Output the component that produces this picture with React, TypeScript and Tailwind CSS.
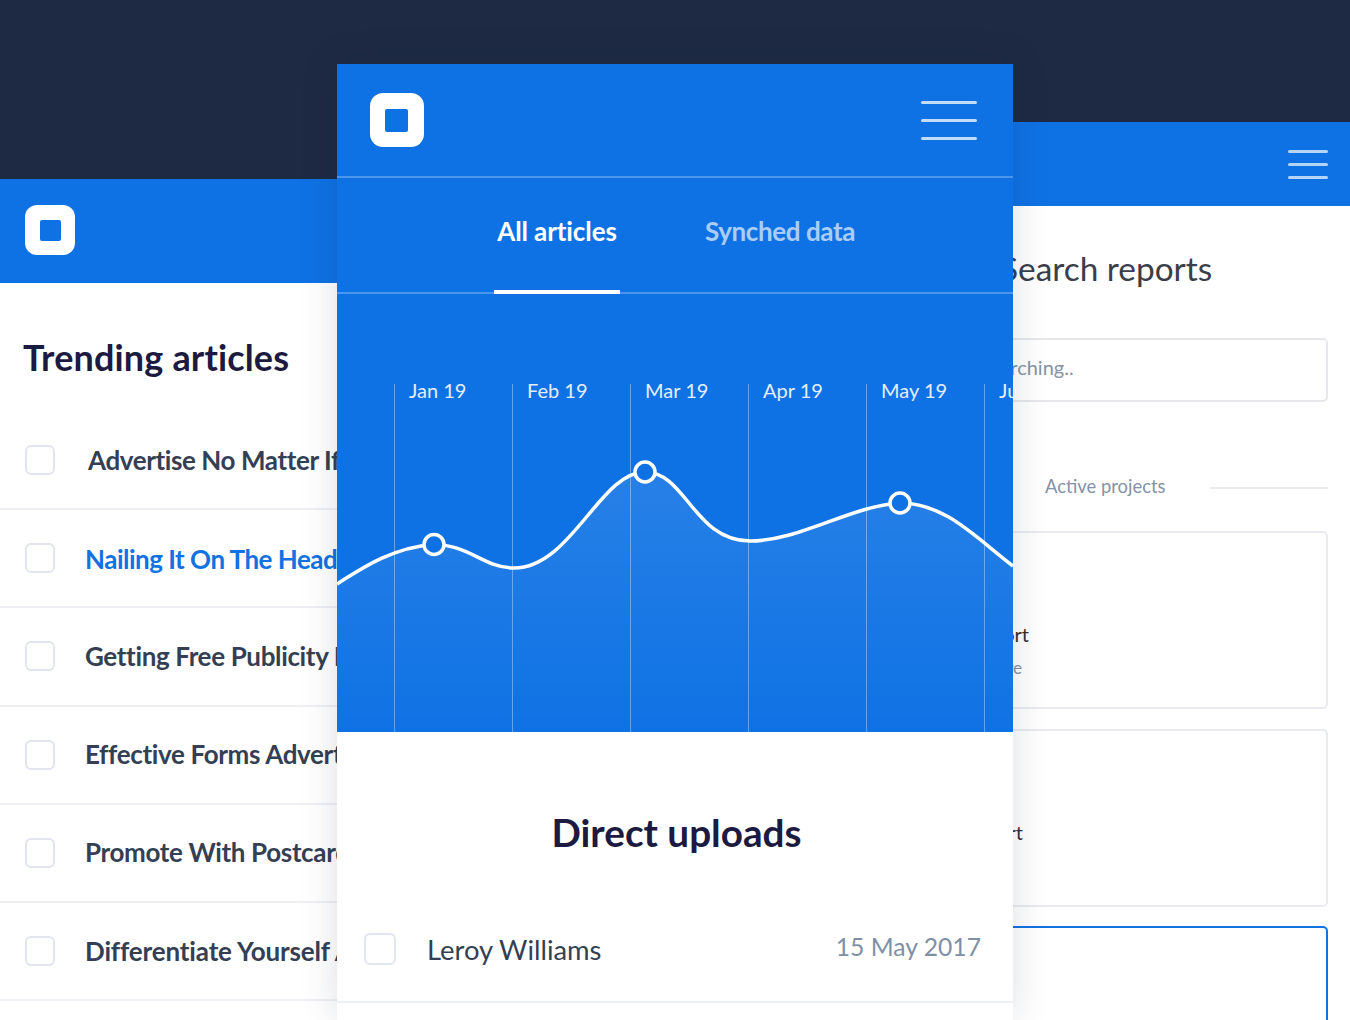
const articles = [
  { title: "Advertise No Matter If You Are Small", track: "tracking-[-0.4px]", offset: "ml-[33px]", color: "text-[#353f54]" },
  { title: "Nailing It On The Head With Free", track: "tracking-[-0.5px]", offset: "ml-[30px] mt-[3px]", color: "text-[#1272e2]" },
  { title: "Getting Free Publicity For Your Brand", track: "tracking-[-0.35px]", offset: "ml-[30px]", color: "text-[#353f54]" },
  { title: "Effective Forms Advertising Internet", track: "tracking-[-0.35px]", offset: "ml-[30px]", color: "text-[#353f54]" },
  { title: "Promote With Postcards For Growth", track: "tracking-[-0.35px]", offset: "ml-[30px]", color: "text-[#353f54]" },
  { title: "Differentiate Yourself And Attract", track: "tracking-[-0.15px]", offset: "ml-[30px]", color: "text-[#353f54]" },
];

const months = ["Jan 19", "Feb 19", "Mar 19", "Apr 19", "May 19", "Jun 19"];

const curve =
  "M337 583 C365 565 395 546 434 543.5 C470 544 484 567 514 567 C571 567 600 471 645 471 C686 471 694 540 750 540 C800 540 850 505 900 502 C945 502 975 536 1013 565";

function Logo({ box, inner, radius }: { box: string; inner: string; radius: string }) {
  return (
    <div className={`${box} ${radius} bg-white flex items-center justify-center shrink-0`}>
      <div className={`${inner} bg-[#0f72e4] rounded-[2px]`} />
    </div>
  );
}

function Check({ size }: { size: string }) {
  return <div className={`${size} shrink-0 rounded-[6px] border-2 border-[#e2e4ef] bg-white`} />;
}

function LeftPanel() {
  return (
    <div className="absolute left-0 top-[179px] w-[337px] h-[841px] bg-white overflow-hidden">
      <div className="h-[104px] bg-[#0f72e4] flex items-center pl-[25px]">
        <Logo box="w-[50px] h-[50px] -mt-[2px]" inner="w-[21px] h-[21px]" radius="rounded-[12px]" />
      </div>
      <h2 className="pl-[23px] pt-[50px] h-[129px] text-[36px] leading-[48px] font-bold tracking-[0.15px] text-[#1c1a40]">
        Trending articles
      </h2>
      <div>
        {articles.map((a) => (
          <div key={a.title} className="h-[98.2px] flex items-center pl-[25px] border-b-2 border-[#eff0f5] whitespace-nowrap">
            <Check size="w-[30px] h-[30px]" />
            <span className={`text-[26px] font-bold ${a.track} ${a.offset} ${a.color}`}>{a.title}</span>
          </div>
        ))}
      </div>
    </div>
  );
}

function Card({ children, active }: { children?: React.ReactNode; active?: boolean }) {
  return (
    <div className={`h-[178px] rounded-[5px] border-2 ${active ? "border-[#1272e2]" : "border-[#e9ebef]"} flex flex-col justify-start`}>
      {children}
    </div>
  );
}

function RightPanel() {
  return (
    <div className="absolute left-[700px] right-0 top-[122px] h-[898px] bg-white overflow-hidden">
      <div className="h-[84px] bg-[#0f72e4] flex items-center justify-end pr-[22px]">
        <div className="w-[40px] flex flex-col gap-[10px]">
          <div className="h-[3px] bg-[#b5d5f8] rounded-full" />
          <div className="h-[3px] bg-[#b5d5f8] rounded-full" />
          <div className="h-[3px] bg-[#b5d5f8] rounded-full" />
        </div>
      </div>
      <div className="pr-[22px]">
        <h2 className="ml-[300px] mt-[37px] text-[33.4px] leading-[50px] text-[#393e4a]">Search reports</h2>
        <div className="mt-[45px] h-[64px] rounded-[5px] border-2 border-[#e6e8ec] flex items-center pl-[277px] pb-[6px] text-[20px] text-[#8492a6]">
          Searching..
        </div>
        <div className="mt-[72px] h-[26px] flex items-center text-[18.4px] text-[#8492a6]">
          <span className="ml-[345px] w-[165px] shrink-0">Active projects</span>
          <div className="flex-1 h-[2px] mt-[2px] bg-[#e9ebef]" />
        </div>
        <div className="mt-[31px] flex flex-col gap-[19.5px]">
          <Card>
            <div className="w-[327px] pt-[88px] text-right text-[20px] leading-[26px] text-[#2c3038] whitespace-nowrap">Project report</div>
            <div className="w-[320px] mt-[10px] text-right text-[17px] leading-[22px] text-[#8492a6] whitespace-nowrap">Updated a while ago once more</div>
          </Card>
          <Card>
            <div className="w-[321px] pt-[88px] text-right text-[20px] leading-[26px] text-[#2c3038] whitespace-nowrap">Project chart</div>
          </Card>
          <Card active />
        </div>
      </div>
    </div>
  );
}

function Chart() {
  return (
    <div className="relative h-[438px] pt-[90px] pl-[57px] flex overflow-hidden">
      {months.map((m) => (
        <div key={m} className="w-[118px] shrink-0 border-l border-white/35 pl-[14px] text-[20px] leading-[12px] text-[#e3eefc] whitespace-nowrap">
          {m}
        </div>
      ))}
      <svg className="absolute left-0 top-0" width="676" height="438" viewBox="337 293 676 438" fill="none">
        <defs>
          <linearGradient id="area" gradientUnits="userSpaceOnUse" x1="0" y1="471" x2="0" y2="732">
            <stop offset="0" stopColor="#ffffff" stopOpacity="0.1" />
            <stop offset="1" stopColor="#ffffff" stopOpacity="0" />
          </linearGradient>
        </defs>
        <path d={`${curve} L1013 732 L337 732 Z`} fill="url(#area)" />
        <path d={curve} stroke="#ffffff" strokeWidth="3.5" />
        {[[434, 543.5], [645, 471], [900, 502]].map(([cx, cy]) => (
          <circle key={cx} cx={cx} cy={cy} r="10" fill="#0f72e4" stroke="#ffffff" strokeWidth="3.5" />
        ))}
      </svg>
    </div>
  );
}

function CenterPanel() {
  return (
    <div className="absolute left-[337px] top-[64px] w-[676px] h-[956px] bg-white shadow-[0_0_36px_rgba(20,30,60,0.14)]">
      <div className="bg-[#0f72e4]">
        <div className="h-[114px] flex items-center justify-between pl-[32.5px] pr-[36px] border-b-2 border-white/25">
          <Logo box="w-[54px] h-[54px]" inner="w-[23px] h-[23px]" radius="rounded-[13px]" />
          <div className="w-[56px] mt-[1px] flex flex-col gap-[15px]">
            <div className="h-[3px] bg-[#c3dcf9] rounded-full" />
            <div className="h-[3px] bg-[#c3dcf9] rounded-full" />
            <div className="h-[3px] bg-[#c3dcf9] rounded-full" />
          </div>
        </div>
        <div className="h-[116px] flex pl-[157px] border-b-2 border-white/25">
          <div className="w-[126px] h-[116px] border-b-4 border-white text-center text-white text-[26px] font-bold tracking-[-0.1px] pt-[35px] leading-[36px]">
            All articles
          </div>
          <div className="ml-[85px] h-[116px] text-[#a9cdf7] text-[26px] font-bold tracking-[-0.4px] pt-[35px] leading-[36px]">
            Synched data
          </div>
        </div>
        <Chart />
      </div>
      <h2 className="pl-[3px] pt-[74px] h-[174px] text-center text-[38.7px] leading-[52px] font-bold text-[#1c1a40]">
        Direct uploads
      </h2>
      <div className="h-[97px] flex items-center pl-[27px] pr-[32px] pb-[10px] border-b-2 border-[#eef0f7]">
        <Check size="w-[32px] h-[32px]" />
        <span className="ml-[31px] mt-[2px] text-[27.4px] text-[#353f54]">Leroy Williams</span>
        <span className="ml-auto -mt-[4px] text-[24.7px] text-[#7f8fa6]">15 May 2017</span>
      </div>
    </div>
  );
}

export default function App() {
  return (
    <div className="relative h-[1020px] overflow-hidden bg-[#1e2a44] font-['Lato',sans-serif]">
      <LeftPanel />
      <RightPanel />
      <CenterPanel />
    </div>
  );
}
